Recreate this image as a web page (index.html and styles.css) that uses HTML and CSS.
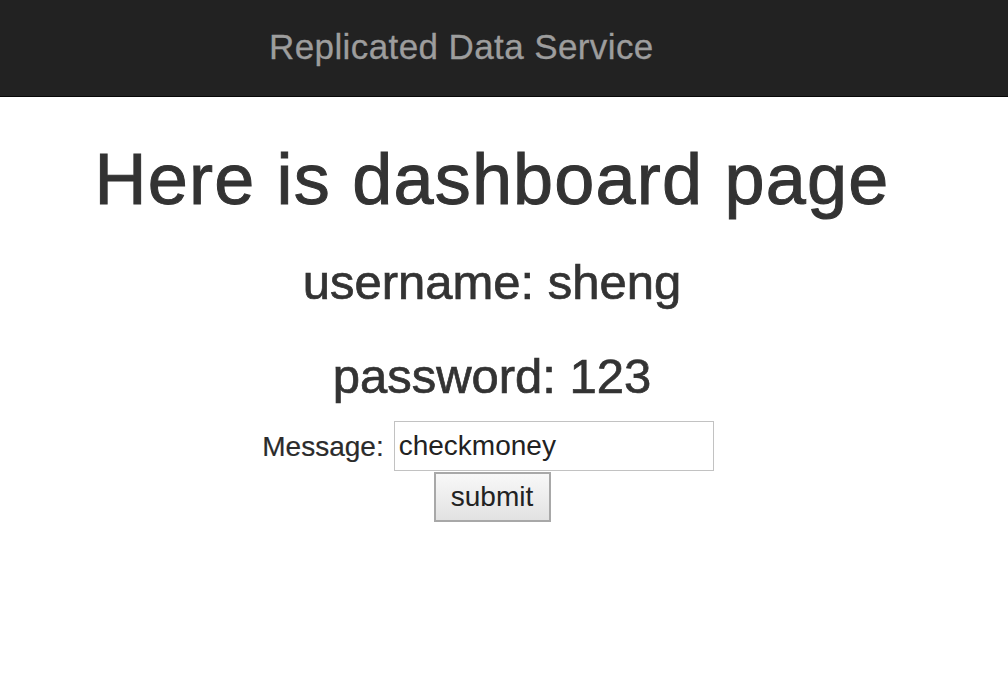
FILE: index.html
```html
<!DOCTYPE html>
<html lang="en">
<head>
<meta charset="utf-8">
<title>Dashboard</title>
<link rel="stylesheet" href="styles.css">
</head>
<body>
<nav class="navbar">
  <a class="brand" href="#">Replicated Data Service</a>
</nav>
<main class="content">
  <h1 class="title">Here is dashboard page</h1>
  <h3 class="info">username: sheng</h3>
  <h3 class="info info-last">password: 123</h3>
  <form class="msg-form">
    <div class="msg-row">
      <label class="msg-label" for="msg">Message:</label>
      <input class="msg-input" id="msg" type="text" value="checkmoney">
    </div>
    <button class="submit-btn" type="button">submit</button>
  </form>
</main>
</body>
</html>
```
FILE: styles.css
```css
html, body {
  margin: 0;
  padding: 0;
  background: #fff;
  font-family: "Liberation Sans", Arial, Helvetica, sans-serif;
  color: #333;
}

.navbar {
  height: 96px;
  background: #222;
  border-bottom: 1px solid #080808;
  display: flex;
  align-items: center;
  padding-left: 269px;
}

.brand {
  color: #9d9d9d;
  font-size: 35px;
  letter-spacing: 0.4px;
  text-decoration: none;
  line-height: 1;
  margin-top: -4px;
  -webkit-text-stroke: 0.3px #9d9d9d;
}

.content {
  width: 984px;
  text-align: center;
  padding-top: 43px;
}

.title {
  font-size: 72px;
  font-weight: 400;
  letter-spacing: 1.2px;
  line-height: 1.1;
  margin: 0 0 37px;
  -webkit-text-stroke: 1px #333;
}

.info {
  font-size: 49px;
  font-weight: 400;
  line-height: 1.1;
  margin: 0 0 40px;
  -webkit-text-stroke: 0.7px #333;
}

.info-last {
  margin-bottom: 17px;
}

.msg-form {
  display: flex;
  flex-direction: column;
  align-items: center;
  gap: 1px;
}

.msg-row {
  display: flex;
  align-items: center;
  gap: 10px;
  padding-right: 8px;
}

.msg-label {
  font-size: 28px;
  color: #2b2b2b;
  padding-top: 2px;
  -webkit-text-stroke: 0.2px #2b2b2b;
}

.msg-input {
  box-sizing: border-box;
  width: 320px;
  height: 50px;
  border: 1px solid #c2c2c2;
  padding: 0 4px;
  font-family: "Liberation Sans", Arial, sans-serif;
  font-size: 28px;
  color: #222;
  background: #fff;
  outline: none;
}

.submit-btn {
  box-sizing: border-box;
  width: 117px;
  height: 50px;
  border: 2px solid #a8a8a8;
  background: linear-gradient(#f8f8f8, #e2e2e2);
  font-family: "Liberation Sans", Arial, sans-serif;
  font-size: 28px;
  color: #222;
  padding: 0;
}
```
